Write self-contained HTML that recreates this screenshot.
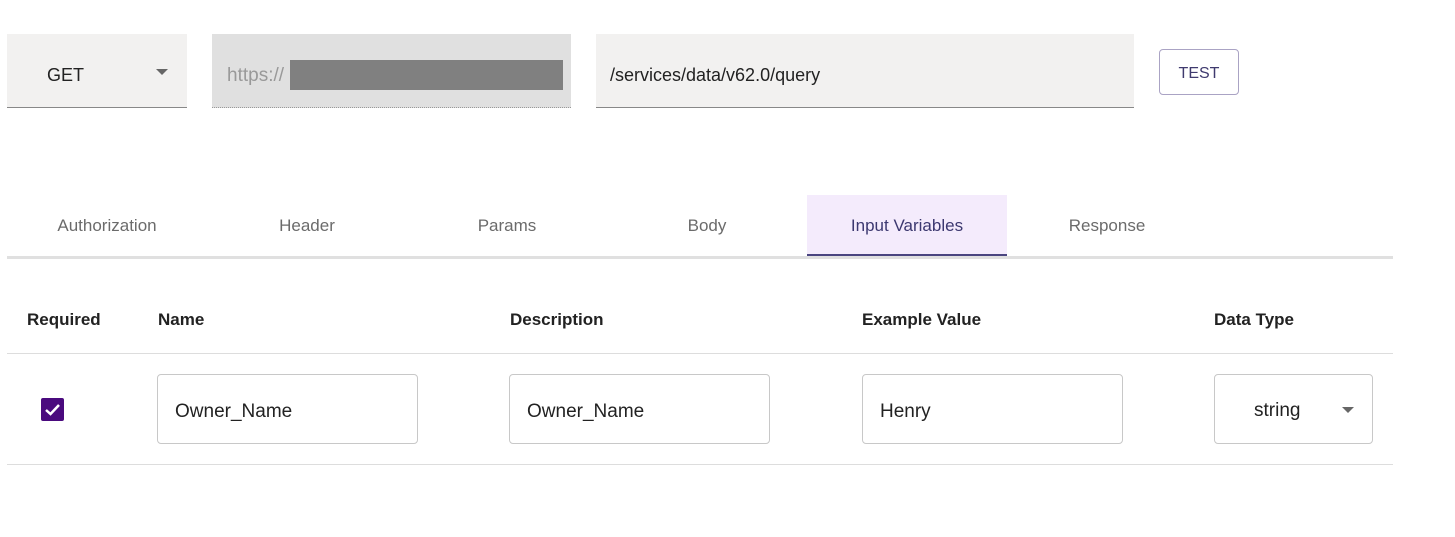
<!DOCTYPE html>
<html><head><style>
body{margin:0;width:1455px;height:537px;background:#fff;position:relative;font-family:"Liberation Sans",sans-serif;overflow:hidden}
.a{position:absolute}
.tab{position:absolute;top:195px;height:59px;width:200px;text-align:center;line-height:62px;font-size:17px;color:#6b6b6b}
.th{position:absolute;top:310px;font-size:17px;color:#222;font-weight:bold}
.in{position:absolute;top:374px;height:70px;border:1px solid #c8c8c8;border-radius:4px;box-sizing:border-box;font-size:19px;color:#222;line-height:74px;padding-left:17px}
</style></head><body>
<div class="a" style="left:7px;top:34px;width:180px;height:73px;background:#f2f1f0;border-bottom:1px solid #888"></div>
<div class="a" style="left:47px;top:65px;font-size:18px;color:#222">GET</div>
<div class="a" style="left:156px;top:69px;width:0;height:0;border-left:6px solid transparent;border-right:6px solid transparent;border-top:6px solid #666"></div>
<div class="a" style="left:212px;top:34px;width:359px;height:73px;background:#e0e0e0;border-bottom:1px dotted #999"></div>
<div class="a" style="left:227px;top:65px;font-size:19px;color:#999">https://</div>
<div class="a" style="left:290px;top:60px;width:273px;height:30px;background:#808080"></div>
<div class="a" style="left:596px;top:34px;width:538px;height:73px;background:#f2f1f0;border-bottom:1px solid #888"></div>
<div class="a" style="left:610px;top:65px;font-size:18px;color:#222">/services/data/v62.0/query</div>
<div class="a" style="left:1159px;top:49px;width:80px;height:46px;border:1px solid #aaa3c4;border-radius:4px;box-sizing:border-box;text-align:center;line-height:48px;font-size:16px;color:#3f3a6e">TEST</div>
<div class="tab" style="left:7px">Authorization</div>
<div class="tab" style="left:207px">Header</div>
<div class="tab" style="left:407px">Params</div>
<div class="tab" style="left:607px">Body</div>
<div class="tab" style="left:807px;background:#f4ebfc;color:#3c3870;border-bottom:2px solid #4a4580">Input Variables</div>
<div class="tab" style="left:1007px">Response</div>
<div class="a" style="left:7px;top:256px;width:1386px;height:3px;background:#e0e0e0"></div>
<div class="th" style="left:27px">Required</div>
<div class="th" style="left:158px">Name</div>
<div class="th" style="left:510px">Description</div>
<div class="th" style="left:862px">Example Value</div>
<div class="th" style="left:1214px">Data Type</div>
<div class="a" style="left:7px;top:353px;width:1386px;height:1px;background:#ddd"></div>
<div class="a" style="left:41px;top:398px;width:23px;height:23px;background:#4a0a7e;border-radius:2px"><svg width="23" height="23"><path d="M5 12l4.5 4L18 7" stroke="#fff" stroke-width="2.5" fill="none"/></svg></div>
<div class="in" style="left:157px;width:261px">Owner_Name</div>
<div class="in" style="left:509px;width:261px">Owner_Name</div>
<div class="in" style="left:862px;width:261px">Henry</div>
<div class="in" style="left:1214px;width:159px;padding-left:39px;line-height:72px">string</div>
<div class="a" style="left:1342px;top:407px;width:0;height:0;border-left:6px solid transparent;border-right:6px solid transparent;border-top:6px solid #666"></div>
<div class="a" style="left:7px;top:464px;width:1386px;height:1px;background:#ddd"></div>
</body></html>
